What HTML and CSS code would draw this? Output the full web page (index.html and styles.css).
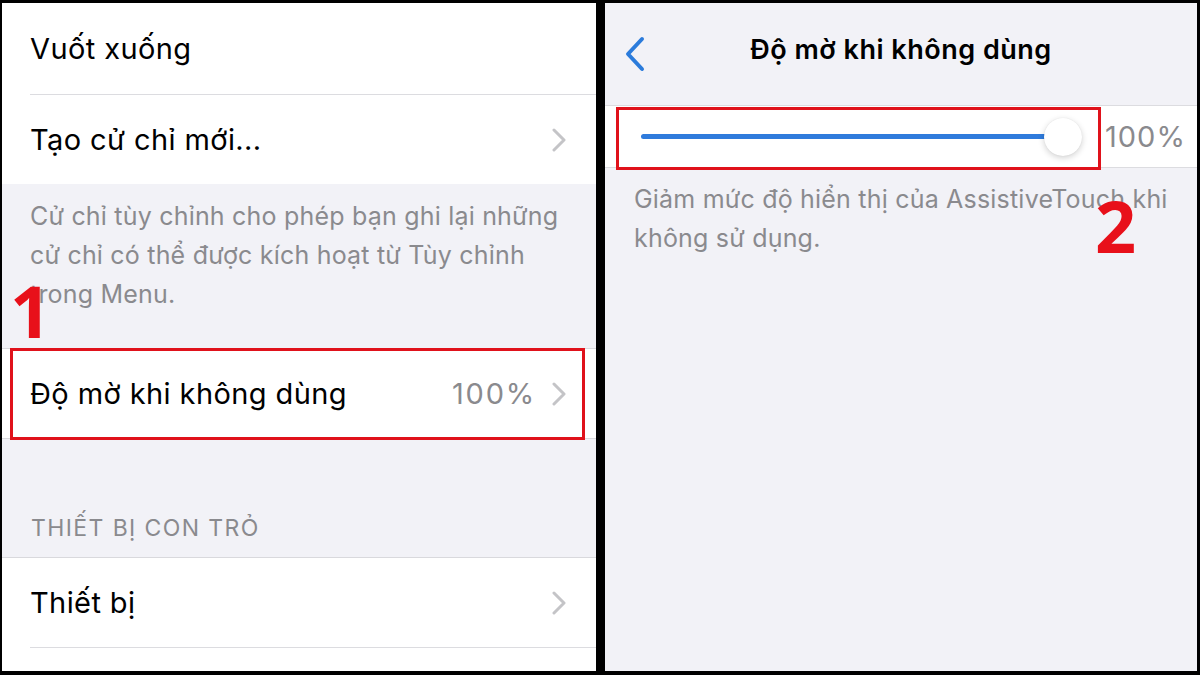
FILE: index.html
```html
<!DOCTYPE html>
<html lang="vi">
<head>
  <meta charset="UTF-8" />
  <title>AssistiveTouch - Độ mờ khi không dùng</title>
  <link rel="stylesheet" href="styles.css">
</head>
<body>
  <div class="frame">
    <!-- left screen: AssistiveTouch settings list -->
    <div class="screen list-screen">
      <div class="group">
        <div class="cell first"><span class="label">Vuốt xuống</span></div>
        <div class="cell last">
          <span class="label">Tạo cử chỉ mới...</span>
          <svg class="chev" width="14" height="24" viewBox="0 0 14 24"><polyline points="2,2 12,12 2,22" /></svg>
        </div>
      </div>
      <p class="footer">Cử chỉ tùy chỉnh cho phép bạn ghi lại những<br>cử chỉ có thể được kích hoạt từ Tùy chỉnh<br>trong Menu.</p>

      <div class="group bordered">
        <div class="cell last marked">
          <span class="label">Độ mờ khi không dùng</span>
          <span class="value">100%</span>
          <svg class="chev" width="14" height="24" viewBox="0 0 14 24"><polyline points="2,2 12,12 2,22" /></svg>
        </div>
      </div>

      <div class="header">THIẾT BỊ CON TRỎ</div>

      <div class="group bordered fill">
        <div class="cell">
          <span class="label">Thiết bị</span>
          <svg class="chev" width="14" height="24" viewBox="0 0 14 24"><polyline points="2,2 12,12 2,22" /></svg>
        </div>
      </div>

      <span class="step step-one">1</span>
    </div>

    <!-- right screen: opacity slider -->
    <div class="screen detail-screen">
      <div class="navbar">
        <svg class="back" width="22" height="36" viewBox="0 0 22 36"><polyline points="18,3 4,18 18,33" /></svg>
        <div class="title">Độ mờ khi không dùng</div>
        <span></span>
      </div>

      <div class="slider-row marked">
        <div class="slider">
          <div class="track"></div>
          <div class="thumb"></div>
        </div>
        <span class="slider-value">100%</span>
      </div>

      <p class="footer detail-footer">Giảm mức độ hiển thị của AssistiveTouch khi<br>không sử dụng.</p>

      <span class="step step-two">2</span>
    </div>
  </div>
</body>
</html>
```

FILE: styles.css
```css
body {
  margin: 0;
  background: #000;
  font-family: Inter, "Noto Sans", sans-serif;
}

.frame {
  display: flex;
  gap: 9px;
  padding: 3px 3px 4px 2px;
  height: 668px;
}

.screen {
  position: relative;
  background: #f2f2f7;
  overflow: hidden;
}

.list-screen {
  width: 594px;
}

.detail-screen {
  width: 592px;
}

.group {
  background: #ffffff;
}

.group.bordered {
  border-top: 1px solid #d9d9dd;
  border-bottom: 1px solid #d9d9dd;
}

.group.fill {
  height: 113px;
  border-bottom: none;
}

.cell {
  position: relative;
  display: flex;
  align-items: center;
  margin-left: 28px;
  padding-right: 30px;
  height: 89px;
  border-bottom: 1px solid #dcdce0;
  font-size: 29px;
  letter-spacing: 0.4px;
  color: #000;
}

.cell.first {
  height: 91px;
}

.cell.last {
  border-bottom: none;
}

.cell .label {
  flex: 1;
}

.cell .value {
  color: #8a8a8e;
  letter-spacing: 1.8px;
  margin-right: 16px;
}

.chev polyline {
  fill: none;
  stroke: #c4c4c7;
  stroke-width: 3;
  stroke-linecap: round;
  stroke-linejoin: round;
}

.footer {
  margin: 0;
  padding: 13px 20px 34px 28px;
  font-size: 25px;
  letter-spacing: 0.2px;
  line-height: 39px;
  color: #8a8a8e;
}

.header {
  padding: 74px 29px 14px;
  font-size: 23px;
  letter-spacing: 1.4px;
  line-height: 30px;
  color: #8a8a8e;
}

/* red annotation boxes */
.marked {
  position: relative;
}

.list-screen .marked::after {
  content: "";
  position: absolute;
  left: -20px;
  right: 11px;
  top: -1px;
  bottom: -2px;
  border: 3px solid #e0121b;
}

.step {
  position: absolute;
  font-family: "Open Sans", "Liberation Sans", sans-serif;
  font-weight: 700;
  font-size: 72px;
  line-height: 1;
  color: #e8101a;
}

.step-one {
  left: 8px;
  top: 271px;
}

.step-two {
  left: 490px;
  top: 186px;
}

/* right screen */
.navbar {
  display: grid;
  grid-template-columns: 60px 1fr 60px;
  align-items: center;
  height: 102px;
}

.back {
  margin-left: 19px;
}

.back polyline {
  fill: none;
  stroke: #2b7bdb;
  stroke-width: 4;
  stroke-linecap: round;
  stroke-linejoin: round;
}

.title {
  text-align: center;
  font-size: 27px;
  font-weight: 600;
  letter-spacing: 0.5px;
  color: #000;
  margin-top: -10px;
}

.slider-row {
  display: flex;
  align-items: center;
  gap: 23px;
  height: 61px;
  padding-left: 36px;
  background: #ffffff;
  border-top: 1px solid #dcdce0;
  border-bottom: 1px solid #dcdce0;
}

.slider-row::after {
  content: "";
  position: absolute;
  left: 11px;
  width: 479px;
  top: 1px;
  bottom: -3px;
  border: 3px solid #e0121b;
}

.slider {
  display: flex;
  align-items: center;
  width: 441px;
}

.track {
  flex: 1;
  height: 5px;
  border-radius: 3px;
  background: #2f7bdc;
}

.thumb {
  width: 38px;
  height: 38px;
  margin-left: -19px;
  border-radius: 50%;
  background: #ffffff;
  box-shadow: 0 2px 6px rgba(0, 0, 0, 0.18), 0 0 1px rgba(0, 0, 0, 0.1);
}

.slider-value {
  font-size: 29px;
  letter-spacing: 1px;
  color: #8a8a8e;
}

.detail-footer {
  padding: 12px 20px 12px 29px;
}
```
